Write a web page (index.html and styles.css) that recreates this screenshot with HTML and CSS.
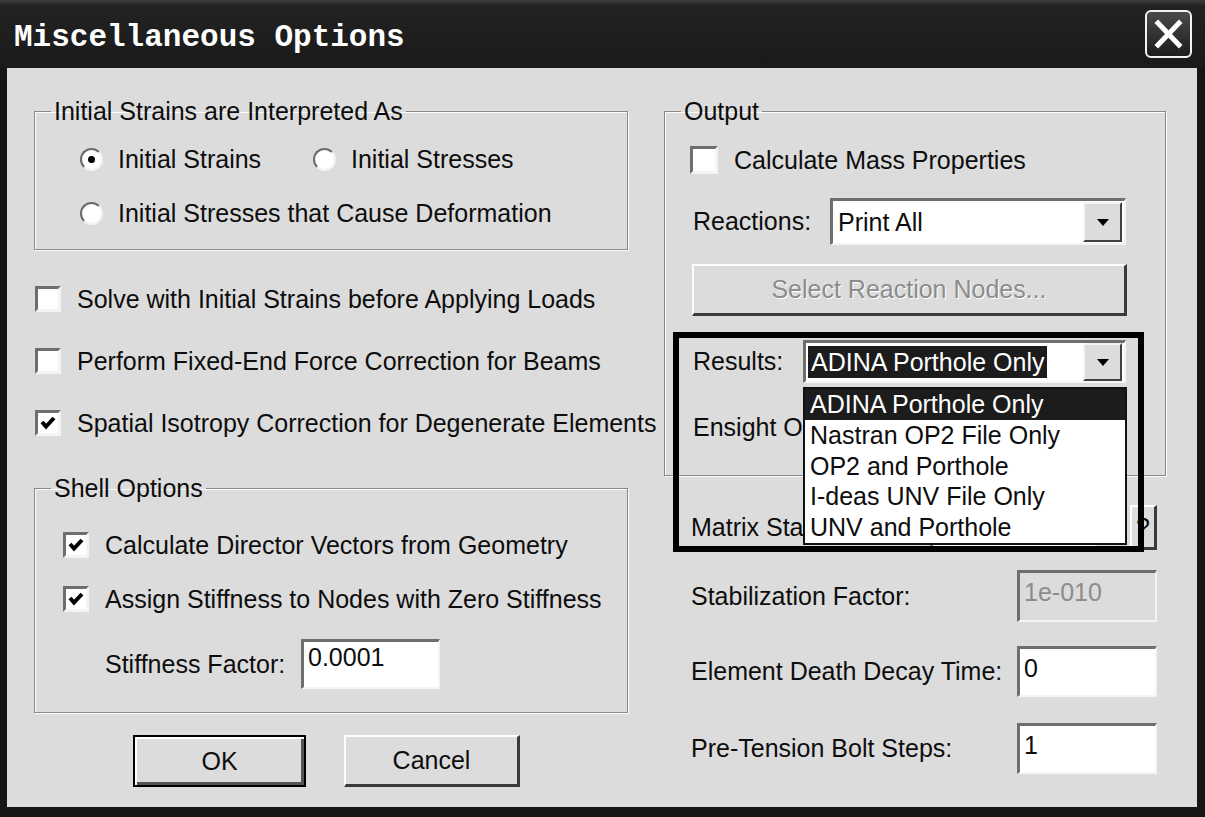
FILE: index.html
```html
<!DOCTYPE html>
<html>
<head>
    <title>Miscellaneous Options</title>
    <link rel="stylesheet" href="styles.css">
</head>
<body>
    <!-- Title bar -->
    <div class="titlebar">
        <span class="title">Miscellaneous Options</span>
        <button class="close-btn">
            <svg width="43" height="44" viewBox="0 0 43 44">
                <path d="M11 11 L32 33 M32 11 L11 33" stroke="#fff" stroke-width="5" stroke-linecap="square" fill="none"/>
            </svg>
        </button>
    </div>

    <div class="panel">
        <!-- Left column -->
        <div class="col-left">
            <fieldset class="group group-strains">
                <legend>Initial Strains are Interpreted As</legend>
                <div class="radio-list">
                    <div class="radio-row">
                        <div class="option"><span class="radio on"></span>Initial Strains</div>
                        <div class="option"><span class="radio"></span>Initial Stresses</div>
                    </div>
                    <div class="radio-row">
                        <div class="option"><span class="radio"></span>Initial Stresses that Cause Deformation</div>
                    </div>
                </div>
            </fieldset>

            <div class="check-list">
                <div class="check-row"><span class="check"></span>Solve with Initial Strains before Applying Loads</div>
                <div class="check-row"><span class="check"></span>Perform Fixed-End Force Correction for Beams</div>
                <div class="check-row">
                    <span class="check">
                        <svg width="18" height="18" viewBox="0 0 18 18"><path d="M3 8 L7 12.5 L15 4" stroke="#000" stroke-width="4" fill="none"/></svg>
                    </span>Spatial Isotropy Correction for Degenerate Elements
                </div>
            </div>

            <fieldset class="group group-shell">
                <legend>Shell Options</legend>
                <div class="shell-body">
                    <div class="check-row">
                        <span class="check">
                            <svg width="18" height="18" viewBox="0 0 18 18"><path d="M3 8 L7 12.5 L15 4" stroke="#000" stroke-width="4" fill="none"/></svg>
                        </span>Calculate Director Vectors from Geometry
                    </div>
                    <div class="check-row">
                        <span class="check">
                            <svg width="18" height="18" viewBox="0 0 18 18"><path d="M3 8 L7 12.5 L15 4" stroke="#000" stroke-width="4" fill="none"/></svg>
                        </span>Assign Stiffness to Nodes with Zero Stiffness
                    </div>
                    <div class="stiffness-row">
                        <span class="stiffness-label">Stiffness Factor:</span>
                        <span class="field field-stiffness">0.0001</span>
                    </div>
                </div>
            </fieldset>

            <div class="actions">
                <button class="btn btn-ok">OK</button>
                <button class="btn btn-cancel">Cancel</button>
            </div>
        </div>

        <!-- Right column -->
        <div class="col-right">
            <fieldset class="group group-output">
                <legend>Output</legend>
                <div class="output-body">
                    <div class="check-row mass-row"><span class="check check-big"></span>Calculate Mass Properties</div>

                    <div class="select-row reactions-row">
                        <span class="select-label">Reactions:</span>
                        <div class="select select-reactions">
                            <span class="select-value">Print All</span>
                            <span class="select-arrow">
                                <svg width="12" height="7" viewBox="0 0 12 7"><path d="M0 0 H12 L6 7 Z" fill="#000"/></svg>
                            </span>
                        </div>
                    </div>

                    <button class="btn btn-disabled">Select Reaction Nodes...</button>

                    <div class="select-row results-row">
                        <span class="select-label">Results:</span>
                        <div class="select select-results">
                            <span class="select-value selected">ADINA Porthole Only</span>
                            <span class="select-arrow">
                                <svg width="12" height="7" viewBox="0 0 12 7"><path d="M0 0 H12 L6 7 Z" fill="#000"/></svg>
                            </span>
                        </div>
                    </div>

                    <div class="select-row ensight-row">
                        <span class="select-label">Ensight Output:</span>
                        <div class="select select-results"></div>
                    </div>
                </div>
            </fieldset>

            <div class="form-row matrix-row">
                <span class="clip-label">Matrix Stabilization:</span>
                <div class="select select-matrix"></div>
                <button class="btn btn-help">?</button>
            </div>
            <div class="form-row stab-row">
                <span>Stabilization Factor:</span>
                <span class="field field-right disabled">1e-010</span>
            </div>
            <div class="form-row death-row">
                <span>Element Death Decay Time:</span>
                <span class="field field-right">0</span>
            </div>
            <div class="form-row bolt-row">
                <span>Pre-Tension Bolt Steps:</span>
                <span class="field field-right">1</span>
            </div>

            <!-- Open list of the Results box -->
            <ul class="dropdown">
                <li class="active">ADINA Porthole Only</li>
                <li>Nastran OP2 File Only</li>
                <li>OP2 and Porthole</li>
                <li>I-deas UNV File Only</li>
                <li>UNV and Porthole</li>
            </ul>

            <!-- Black frame drawn round the results area -->
            <div class="annotation"></div>
        </div>
    </div>
</body>
</html>
```

FILE: styles.css
```css
/* Dialog styles */

* {
    box-sizing: border-box;
}

body {
    margin: 0;
    width: 1205px;
    height: 817px;
    overflow: hidden;
    background-color: #161616;
    font-family: "Liberation Sans", Arial, sans-serif;
    font-size: 25px;
    color: #0d0d0d;
}

/* Title bar */
.titlebar {
    height: 68px;
    display: flex;
    align-items: center;
    justify-content: space-between;
    padding: 0 13px 0 14px;
    background: linear-gradient(#3c3c3c 0, #222222 6px, #1a1a1a 100%);
}

.title {
    font-family: "Liberation Mono", monospace;
    font-weight: bold;
    font-size: 31px;
    color: #ffffff;
    padding-top: 6px;
}

.close-btn {
    width: 47px;
    height: 48px;
    padding: 0;
    border: 2px solid #f2f2f2;
    border-radius: 6px;
    background: linear-gradient(#4a4a4a, #1c1c1c);
    display: flex;
    align-items: center;
    justify-content: center;
}

/* Main panel */
.panel {
    margin: 0 8px 0 7px;
    height: 739px;
    background-color: #dcdcdc;
    display: flex;
    padding: 31px 0 0 27px;
}

.col-left {
    width: 630px;
    display: flex;
    flex-direction: column;
}

.col-right {
    width: 502px;
    position: relative;
    display: flex;
    flex-direction: column;
}

/* Group boxes */
.group {
    margin: 0;
    padding: 0 0 0 16px;
    border: 1px solid #8a8a8a;
    box-shadow: 1px 1px 0 #fbfbfb, inset 1px 1px 0 #fbfbfb;
    min-width: 0;
}

.group legend {
    padding: 0 3px;
    height: 24px;
    line-height: 24px;
}

.group-strains {
    width: 594px;
}

.radio-list {
    padding: 16px 0 16px 29px;
    display: flex;
    flex-direction: column;
    gap: 14px;
}

.radio-row {
    display: grid;
    grid-template-columns: 233px auto;
    height: 40px;
    align-items: center;
}

.option {
    display: flex;
    align-items: center;
    gap: 15px;
    line-height: 40px;
    white-space: nowrap;
}

.radio {
    width: 23px;
    height: 23px;
    border-radius: 50%;
    background-color: #ffffff;
    border: 2px solid;
    border-color: #6a6a6a #f2f2f2 #f2f2f2 #6a6a6a;
    display: flex;
    align-items: center;
    justify-content: center;
    flex-shrink: 0;
}

.radio.on::after {
    content: "";
    width: 7px;
    height: 7px;
    border-radius: 50%;
    background-color: #000000;
}

/* Check boxes */
.check-list {
    margin: 29px 0 0 1px;
    display: flex;
    flex-direction: column;
    gap: 22px;
}

.check-row {
    display: flex;
    align-items: center;
    gap: 16px;
    height: 40px;
    line-height: 40px;
    white-space: nowrap;
}

.check {
    width: 26px;
    height: 26px;
    flex-shrink: 0;
    background-color: #ffffff;
    border: 3px solid;
    border-color: #6e6e6e #f4f4f4 #f4f4f4 #6e6e6e;
    display: flex;
    align-items: center;
    justify-content: center;
}

.check-big {
    width: 28px;
    height: 28px;
}

/* Shell options */
.group-shell {
    width: 594px;
    margin-top: 33px;
}

.shell-body {
    padding: 25px 0 23px 12px;
    display: flex;
    flex-direction: column;
    gap: 14px;
}

.stiffness-row {
    display: flex;
    align-items: center;
    margin-top: 6px;
    padding-left: 42px;
}

.stiffness-label {
    width: 196px;
}

/* Text fields */
.field {
    display: block;
    background-color: #ffffff;
    border-style: solid;
    border-width: 3px 2px 2px 3px;
    border-color: #6e6e6e #f4f4f4 #f4f4f4 #6e6e6e;
    padding: 0 4px;
    line-height: 30px;
}

.field-stiffness {
    width: 139px;
    height: 50px;
}

.field-right {
    width: 140px;
    height: 51px;
    line-height: 38px;
}

.field.disabled {
    background-color: #dcdcdc;
    color: #8c8c8c;
    height: 52px;
}

/* Buttons */
.btn {
    font: inherit;
    color: #0d0d0d;
    background-color: #dcdcdc;
    border-style: solid;
    border-width: 2px 3px 3px 2px;
    border-color: #ffffff #3a3a3a #3a3a3a #ffffff;
    padding: 0;
}

.actions {
    display: flex;
    gap: 38px;
    margin: 22px 0 0 99px;
}

.btn-ok {
    width: 173px;
    height: 52px;
    border: 2px solid #000000;
    box-shadow: inset 2px 2px 0 #ffffff, inset -3px -3px 0 #555555;
}

.btn-cancel {
    width: 176px;
    height: 52px;
}

.btn-disabled {
    width: 435px;
    height: 52px;
    margin: 19px 0 0 11px;
    color: #8c8c8c;
    text-shadow: 1px 1px 0 #ffffff;
}

/* Output group */
.group-output {
    width: 502px;
}

.output-body {
    padding: 17px 0 26px 0;
    display: flex;
    flex-direction: column;
}

.mass-row {
    margin-left: 9px;
}

.select-row {
    display: flex;
    align-items: center;
    padding-left: 12px;
}

.reactions-row {
    margin-top: 18px;
}

.reactions-row .select-label {
    width: 137px;
}

.results-row {
    margin-top: 24px;
}

.ensight-row {
    margin-top: 23px;
}

.results-row .select-label,
.ensight-row .select-label {
    width: 110px;
    flex-shrink: 0;
    white-space: nowrap;
    overflow: hidden;
}

/* Drop-down boxes */
.select {
    display: flex;
    align-items: center;
    justify-content: space-between;
    background-color: #ffffff;
    border-style: solid;
    border-width: 3px 2px 2px 3px;
    border-color: #6e6e6e #f4f4f4 #f4f4f4 #6e6e6e;
    padding: 0 2px 0 5px;
}

.select-reactions {
    width: 296px;
    height: 47px;
}

.select-results {
    width: 323px;
    height: 43px;
    padding-left: 2px;
}

.select-value {
    line-height: 32px;
    white-space: nowrap;
}

.select-value.selected {
    background-color: #1c1c1c;
    color: #ffffff;
    padding: 0 3px;
}

.select-arrow {
    width: 39px;
    height: 38px;
    background-color: #dcdcdc;
    border-style: solid;
    border-width: 2px;
    border-color: #f4f4f4 #404040 #404040 #f4f4f4;
    display: flex;
    align-items: center;
    justify-content: center;
}

.select-reactions .select-arrow {
    height: 40px;
}

/* Rows under the output group */
.form-row {
    display: flex;
    align-items: center;
    justify-content: space-between;
    padding: 0 9px 0 27px;
    white-space: nowrap;
}

.clip-label {
    width: 112px;
    overflow: hidden;
    flex-shrink: 0;
}

.matrix-row {
    margin-top: 29px;
    height: 45px;
}

.select-matrix {
    width: 167px;
    height: 45px;
    margin-left: auto;
}

.btn-help {
    width: 27px;
    height: 45px;
    margin-left: 33px;
}

.stab-row {
    margin-top: 20px;
}

.death-row {
    margin-top: 24px;
}

.bolt-row {
    margin-top: 26px;
}

/* Open list */
.dropdown {
    position: absolute;
    left: 139px;
    top: 288px;
    width: 324px;
    height: 158px;
    margin: 0;
    padding: 0;
    list-style: none;
    background-color: #ffffff;
    border: 2px solid #111111;
    z-index: 2;
}

.dropdown li {
    height: 30.8px;
    line-height: 30.8px;
    padding-left: 5px;
    white-space: nowrap;
}

.dropdown li.active {
    background-color: #1c1c1c;
    color: #ffffff;
}

.annotation {
    position: absolute;
    left: 9px;
    top: 233px;
    width: 471px;
    height: 220px;
    border: 6px solid #000000;
    z-index: 3;
}
```
